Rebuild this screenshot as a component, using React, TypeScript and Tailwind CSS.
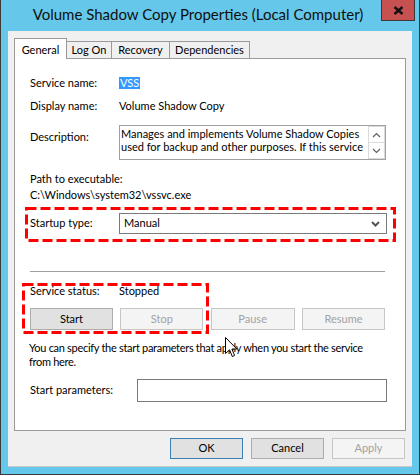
import React from "react";

type BtnProps = {
  label: string;
  disabled?: boolean;
  primary?: boolean;
  className?: string;
};

function Btn({ label, disabled, primary, className }: BtnProps) {
  const tone = disabled
    ? "bg-[#f4f4f4] border-[#c6c6c6] text-[#a2a2a2]"
    : primary
    ? "bg-[#e1e1e1] border-[#3c7fb1] text-black"
    : "bg-[#e1e1e1] border-[#adadad] text-black";
  return (
    <div className={`flex items-center justify-center border ${tone} ${className}`}>
      {label}
    </div>
  );
}

function Chevron({ up, className }: { up?: boolean; className?: string }) {
  return (
    <svg width="9" height="6" viewBox="0 0 9 6" className={className}>
      <path
        d={up ? "M1 5 L4.5 1.5 L8 5" : "M1 1 L4.5 4.5 L8 1"}
        fill="none"
        stroke="#606060"
        strokeWidth="1.2"
      />
    </svg>
  );
}

function DashBox({ className }: { className: string }) {
  return (
    <svg className={`pointer-events-none absolute ${className}`} width="100%" height="100%">
      <rect
        x="1.5"
        y="1.5"
        width="calc(100% - 3px)"
        height="calc(100% - 3px)"
        fill="none"
        stroke="#ff0000"
        strokeWidth="3"
        strokeDasharray="10 4"
      />
    </svg>
  );
}

export default function App() {
  return (
    <div className="flex h-[475px] w-[420px] flex-col border-x border-b border-[#3a3a3a] bg-[#65c8ea] px-[7px] pb-[7px] font-[Lato,'Liberation_Sans',sans-serif] text-[11px] text-black">
      {/* title bar */}
      <div className="relative flex h-[31px] shrink-0 items-center justify-center pr-[24px] pb-[2px] text-[15px] text-[#101010]">
        Volume Shadow Copy Properties (Local Computer)
        <div className="absolute top-0 right-[-3px] flex h-[21px] w-[34px] items-center justify-center border border-t-0 border-[#3a3a3a] bg-[#c75050]">
          <svg width="11" height="9" viewBox="0 0 11 9">
            <path d="M1.5 1 L9.5 8 M9.5 1 L1.5 8" stroke="#111" strokeWidth="2.4" />
          </svg>
        </div>
      </div>

      {/* client */}
      <div className="flex flex-1 flex-col border-b border-[#c8c8c8] bg-[#f0f0f0]">
        {/* tabs */}
        <div className="mt-[7px] ml-[6px] flex h-[20px] items-end">
          <div className="relative z-10 mb-[-1px] flex h-[21px] w-[53px] items-start justify-center border-x border-t border-[#9a9a9a] bg-white pt-[3px]">
            General
          </div>
          <div className="flex h-[17px] w-[45px] items-center justify-center border-t border-r border-[#9a9a9a]">
            Log On
          </div>
          <div className="flex h-[17px] w-[58px] items-center justify-center border-t border-r border-[#9a9a9a]">
            Recovery
          </div>
          <div className="flex h-[17px] w-[80px] items-center justify-center border-t border-r border-[#9a9a9a]">
            Dependencies
          </div>
        </div>

        {/* panel */}
        <div className="relative mx-[6px] flex h-[373px] flex-col border border-[#9a9a9a] bg-white pl-[15px]">
          <div className="mt-[16px] flex h-4 items-center">
            <span className="w-[89px]">Service name:</span>
            <span className="bg-[#3399ff] px-px leading-[12px] text-white">VSS</span>
          </div>
          <div className="mt-[7px] flex h-4 items-center">
            <span className="w-[89px]">Display name:</span>
            <span>Volume Shadow Copy</span>
          </div>
          <div className="mt-[11px] flex items-start">
            <span className="w-[89px] pt-[4px] leading-4">Description:</span>
            <div className="flex h-[35px] w-[267px] border border-[#a0a0a0]">
              <div className="flex-1 overflow-hidden pt-px pl-px leading-[13px] whitespace-nowrap">
                Manages and implements Volume Shadow Copies
                <br />
                used for backup and other purposes. If this service
              </div>
              <div className="flex w-[17px] flex-col">
                <div className="flex flex-1 items-center justify-center border border-[#dadada]">
                  <Chevron up />
                </div>
                <div className="flex flex-1 items-center justify-center border border-t-0 border-[#dadada]">
                  <Chevron />
                </div>
              </div>
            </div>
          </div>
          <div className="mt-[11px] flex h-4 items-center">Path to executable:</div>
          <div className="flex h-4 items-center">C:\Windows\system32\vssvc.exe</div>
          <div className="mt-[10px] flex h-[21px] items-center">
            <span className="w-[89px]">Startup type:</span>
            <div className="flex h-[21px] w-[268px] items-center justify-between border border-[#7a7a7a] pr-[6px] pl-[4px]">
              <span>Manual</span>
              <svg width="9" height="6" viewBox="0 0 9 6">
                <path d="M1 1 L4.5 4.5 L8 1" fill="none" stroke="#555" strokeWidth="2" />
              </svg>
            </div>
          </div>
          <div className="mt-[37px] h-px w-[355px] bg-[#a0a0a0]" />
          <div className="mt-[11px] flex h-4 items-center">
            <span className="w-[89px]">Service status:</span>
            <span>Stopped</span>
          </div>
          <div className="mt-[9px] flex w-[355px] justify-between">
            <Btn label="Start" className="h-[22px] w-[83px]" />
            <Btn label="Stop" disabled className="h-[22px] w-[83px]" />
            <Btn label="Pause" disabled className="h-[22px] w-[84px]" />
            <Btn label="Resume" disabled className="h-[22px] w-[83px]" />
          </div>
          <p className="mt-[11px] -ml-px leading-[14px] tracking-[-0.3px] whitespace-nowrap">
            You can specify the start parameters that apply when you start the service
            <br />
            from here.
          </p>
          <div className="mt-[10px] flex h-[23px] items-center">
            <span className="w-[107px]">Start parameters:</span>
            <div className="h-[23px] w-[250px] border border-[#7a7a7a]" />
          </div>

          {/* annotations */}
          <DashBox className="top-[148px] left-[10px] h-[35px] w-[371px]" />
          <DashBox className="top-[224px] left-[7px] h-[51px] w-[187px]" />
          <svg
            className="pointer-events-none absolute top-[278px] left-[210px]"
            width="13"
            height="21"
            viewBox="0 0 13 21"
          >
            <path
              d="M0.5 0.5 L0.5 16.5 L4.5 12.8 L7.3 19.5 L9.6 18.5 L6.9 12 L11.8 12 Z"
              fill="white"
              stroke="black"
              strokeWidth="1"
              strokeLinejoin="miter"
            />
          </svg>
        </div>

        {/* dialog buttons */}
        <div className="mt-[7px] flex justify-end gap-[8px] pr-[7px]">
          <Btn label="OK" primary className="h-[21px] w-[73px]" />
          <Btn label="Cancel" className="h-[21px] w-[73px]" />
          <Btn label="Apply" disabled className="h-[21px] w-[73px]" />
        </div>
      </div>
    </div>
  );
}
